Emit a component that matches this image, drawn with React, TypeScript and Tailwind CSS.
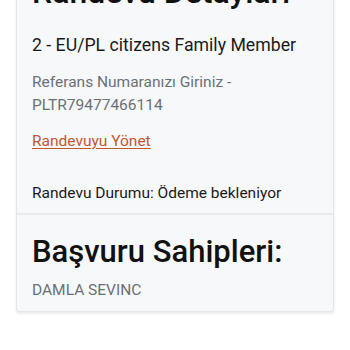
import React from "react";

export default function App() {
  return (
    <div className="w-[350px] h-[350px] overflow-hidden bg-white" style={{ fontFamily: "Roboto, 'Noto Sans', sans-serif" }}>
      <div className="mx-4 -mt-[60px] rounded-[3px] border border-[#e3e5e8] bg-[#f7f8fa] shadow-[0_2px_3px_rgba(0,0,0,0.08)]">
        <div className="px-[15px] pt-[32px] pb-[8px]">
          <h1 className="text-[32px] leading-[38px] font-medium text-[#111]">Randevu Detayları</h1>
          <p className="mt-[21px] text-[17.7px] leading-[27px] text-[#1a1a1a]">2 - EU/PL citizens Family Member</p>
          <p className="mt-[12px] text-[15.5px] leading-[23px] text-[#6b7077]">
            Referans Numaranızı Giriniz -
            <br />
            PLTR79477466114
          </p>
          <a href="#" className="mt-[12px] block text-[15.5px] leading-[24px] text-[#c0582f] underline underline-offset-2">
            Randevuyu Yönet
          </a>
          <p className="mt-[28px] text-[15.5px] leading-[24px] text-[#1a1a1a]">Randevu Durumu: Ödeme bekleniyor</p>
        </div>
        <div className="border-t-[2px] border-[#e9eaec] px-[15px] pt-[18px] pb-[9px]">
          <h2 className="text-[31px] leading-[38px] font-medium text-[#111]">Başvuru Sahipleri:</h2>
          <p className="mt-[7px] text-[15.5px] leading-[24px] text-[#6b7077]">DAMLA SEVINC</p>
        </div>
      </div>
    </div>
  );
}
